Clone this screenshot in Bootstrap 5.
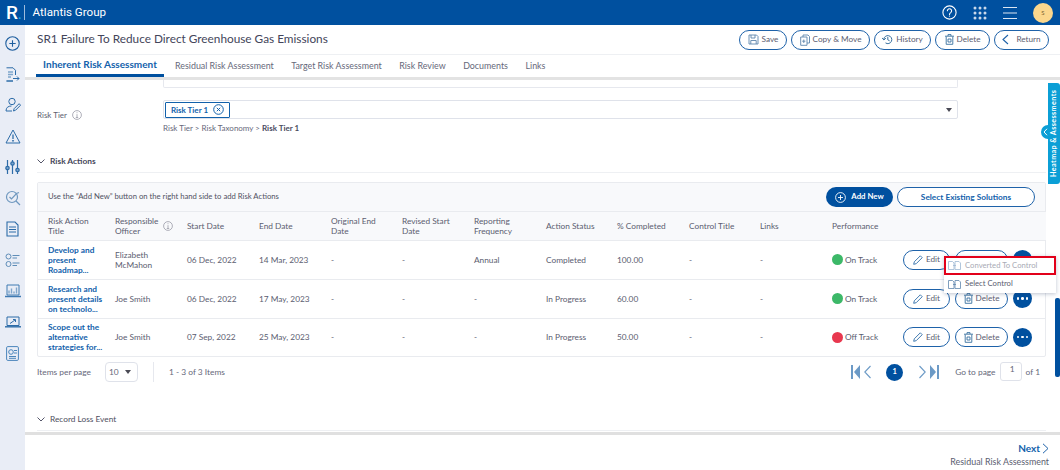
<!DOCTYPE html>
<html lang="en">
<head>
<meta charset="utf-8">
<title>Atlantis Group</title>
<link rel="stylesheet" href="https://cdn.jsdelivr.net/npm/bootstrap@5.3.0/dist/css/bootstrap.min.css">
<style>
html,body{height:470px;overflow:hidden}
body{font-family:"Lato","Liberation Sans",sans-serif;font-size:8.3px;color:#55566a;background:#fff}
svg{display:block;flex:none}
.app-top{height:25px;background:#00509f;color:#fff;padding:0 8px 0 6px}
.app-logo{font-family:"Roboto",sans-serif;font-weight:500;font-size:19px;line-height:1}
.app-logo i{font-style:normal;color:#19a9e5;font-size:13px}
.app-sep{width:1px;height:15px;background:#9dbbdc;margin:0 8px 0 2px}
.app-name{font-family:"Roboto",sans-serif;font-size:11.6px}
.app-avatar{width:20px;height:20px;border-radius:50%;background:#fbd78d;color:#7a6530;font-size:6px;margin-right:-1px}
.app-body{height:445px}
.app-side{width:25px;background:#e9edf6;padding-top:7.500px;gap:10px}
.side-cell{height:21px}
.app-main{width:1035px}
.title-bar{height:30px;padding:0 11px 0 12px;border-bottom:1px solid #eef0f3}
.title-txt{font-size:11.800px;color:#43455a;font-weight:400;margin:0}
.pill{height:20px;border:1px solid #1e62a9;border-radius:10px;background:#fff;font-size:8.200px;color:#5b5d70;gap:3px;padding:0;line-height:1}
.pill:hover{background:#fff;color:#5b5d70;border-color:#1e62a9}
.w-save{width:48px}.w-copy{width:79px}.w-hist{width:57px}.w-del{width:55px}.w-ret{width:55px}
.w-edit{width:47px}.w-del2{width:53px}
.tab-bar{padding-left:11px;border-bottom:3px solid #e3e3e3;height:25px}
.tab-link{font-size:8.900px;color:#66687a;padding:0;height:22px;display:flex;align-items:center;text-decoration:none;white-space:nowrap;margin-right:17.500px}
.tab-on{color:#1261ab;font-weight:700;font-size:10px;border-bottom:3px solid #00509f;margin-right:11px;width:128px;justify-content:center}
.content-pane{height:352px;overflow:hidden;padding:0 14px 0 12px}
.field-stub{width:795px;height:8px;margin-left:126px;border:1px solid #e6e8ee;border-top:0;border-radius:0 0 2px 2px}
.tier-row{margin-top:12px;height:19px}
.tier-label{width:126px;color:#5d5f70;gap:5px;font-size:8px;padding-top:11px}
.tier-box{width:795px;height:19px;border:1px solid #dfe2ea;border-radius:2px;padding:0 1px}
.tier-chip{width:65px;height:16px;border:1.500px solid #1261ab;border-radius:1px;color:#1261ab;font-weight:700;font-size:8px;gap:5px}
.caret-dn{width:0;height:0;border-left:3px solid transparent;border-right:3px solid transparent;border-top:4px solid #4a4a55}
.crumb{margin:3px 0 0 126px;color:#66687a;font-size:8px}
.crumb b{font-weight:700;color:#4a4b5e}
.sec-head{margin-top:20px;height:14px;gap:5px;color:#45475a;font-weight:700;font-size:8.400px}
.sec-rule{border-top:1px solid #eef0f3;margin:4px 0 9px}
.grid-panel{border:1px solid #e9ebef;border-radius:2px}
.grid-hint{height:29px;background:#f8f9fb;padding:0 10px;border-bottom:1px solid #e9ebef;color:#505263;font-size:7.700px}
.btn-add{width:67px;height:20px;background:#00509f;color:#fff;border-radius:10px;border:0;font-weight:700;font-size:7.800px;gap:5px;padding:0;margin-right:4px}
.btn-add:hover{background:#00509f;color:#fff}
.btn-sel{width:138px;height:20px;border:1px solid #1e62a9;border-radius:10px;color:#1261ab;font-weight:700;font-size:8.300px;padding:0;background:#fff}
.btn-sel:hover{background:#fff;color:#1261ab;border-color:#1e62a9}
.risk-tbl{table-layout:fixed;width:1008px;margin:0;font-size:8.300px;--bs-table-color:#5b5d70}
.risk-tbl th,.risk-tbl td{padding:0 0 0 10px;vertical-align:middle;border-bottom:1px solid #e9ebef;line-height:10px}
.risk-tbl th{height:28px;font-weight:400;background:#f8f9fb;color:#5b5d70;border-bottom:1px solid #e9ebef}
.risk-tbl td{height:39px}
.risk-tbl tr:last-child td{border-bottom:0;height:38px}
.title-lnk{color:#1261ab;font-weight:700;text-decoration:none;display:block;font-size:8.300px;white-space:nowrap}
.dot-st{width:11px;height:11px;border-radius:50%;display:inline-block;margin-right:2px}
.dot-ok{background:#3cb868}.dot-bad{background:#e8384f}
.act-cell{gap:5px}
.more-btn{width:19px;height:19px;border-radius:50%;background:#00509f;gap:2px}
.more-btn span{width:2.400px;height:2.400px;border-radius:50%;background:#fff}
.pg-row{height:30px;color:#66687a;font-size:8.400px}
.pg-sel{width:33px;height:20px;border:1px solid #dfe2ea;border-radius:4px;margin-left:14px;padding:0 6px 0 3px}
.pg-div{width:1px;height:20px;background:#e6e8ee;margin:0 15px}
.pg-right{margin-right:6px}
.pg-num{width:17px;height:17px;border-radius:50%;background:#00509f;color:#fff;font-weight:700;font-size:7.500px;margin:0 16px 0 15px}
.pg-input{width:22px;height:19px;border:1px solid #dfe2ea;border-radius:3px;margin:-2px 4px 0 4px;color:#66687a;padding:0 6px 4px 0}
.sec-foot{margin-top:25px;gap:5px;height:14px;color:#4d4f60;font-size:8.300px}
.sec-rule2{border-top:1px solid #eef0f3;margin-top:4px}
.foot-bar{height:35px;border-top:3px solid #e0e0e0;padding:8px 11px 0 0;text-align:right}
.foot-next{color:#1261ab;font-weight:700;font-size:10px;gap:2px;line-height:11px}
.foot-sub{color:#5b5d70;font-size:8.900px;line-height:10px;margin-top:3px}
.heat-tab{position:absolute;right:0;top:83px;width:12px;height:101px;background:#0b9fd6;border-radius:3px 0 0 3px;color:#fff;font-size:7.200px;font-weight:700;letter-spacing:.4px;writing-mode:vertical-rl;transform:rotate(180deg);text-align:center;line-height:12px}
.heat-toggle{position:absolute;left:1041px;top:125px;width:8px;height:14px;background:#0b9fd6;border-radius:7px 0 0 7px}
.scroll-thumb{position:absolute;left:1055px;top:298px;width:5px;height:79px;background:#00509f;border-radius:2px}
.ctx-menu{position:absolute;left:944px;top:256px;width:112px;height:37px;background:#fff;box-shadow:0 1px 4px rgba(40,60,100,.3);font-size:7.700px;color:#5b5d70}
.ctx-item{height:18px;padding-left:4px;gap:4px}
.ctx-red{height:19px;border:2px solid #e2001a;padding-left:2px;color:#a9abb5}
</style>
</head>
<body>
<header class="app-top d-flex align-items-center">
  <span class="app-logo">R<i>.</i></span>
  <span class="app-sep"></span>
  <span class="app-name">Atlantis Group</span>
  <div class="ms-auto d-flex align-items-center">
    <svg width="15" height="15" viewBox="0 0 15 15" fill="none" stroke="#fff" stroke-width="1.1"><circle cx="7.5" cy="7.5" r="6.6"/><path d="M5.4 5.8a2.1 2.1 0 1 1 3.3 1.8c-.8.5-1.2.9-1.2 1.8" stroke-linecap="round"/><circle cx="7.5" cy="11.1" r=".6" fill="#fff" stroke="none"/></svg>
    <svg class="ms-3" width="14" height="14" viewBox="0 0 14 14" fill="#c9d8ea"><circle cx="2" cy="2" r="1.5"/><circle cx="7" cy="2" r="1.5"/><circle cx="12" cy="2" r="1.5"/><circle cx="2" cy="7" r="1.5"/><circle cx="7" cy="7" r="1.5"/><circle cx="12" cy="7" r="1.5"/><circle cx="2" cy="12" r="1.5"/><circle cx="7" cy="12" r="1.5"/><circle cx="12" cy="12" r="1.5"/></svg>
    <svg class="ms-3" width="14" height="14" viewBox="0 0 14 14" stroke="#dbe6f2" stroke-width="1.1"><path d="M0 1.500h14M0 7h14M0 12.500h14"/></svg>
    <span class="app-avatar d-flex align-items-center justify-content-center ms-3">S</span>
  </div>
</header>
<div class="app-body d-flex">
  <nav class="app-side d-flex flex-column align-items-center">
    <span class="side-cell d-flex align-items-center"><svg width="15" height="15" viewBox="0 0 15 15" fill="none" stroke="#1f5f9f" stroke-width="1.1"><circle cx="7.5" cy="7.5" r="6.7"/><path d="M7.5 4.300v6.400M4.300 7.500h6.400"/></svg></span>
    <span class="side-cell d-flex align-items-center"><svg width="15" height="15" viewBox="0 0 15 15" fill="none" stroke="#2d6ca8" stroke-width="1"><path d="M1.500.8h6.500L10.500 3.300V8M8 14H1.500z"/><path d="M3 5h5M3 7.500h5M3 10h3" stroke="#7fa6cc" stroke-width="1.300"/><path d="M8 11.500h6M12 9.500l2 2-2 2"/></svg></span>
    <span class="side-cell d-flex align-items-center"><svg width="16" height="16" viewBox="0 0 16 16" fill="none" stroke="#2d6ca8" stroke-width="1"><circle cx="7" cy="4.500" r="3.200"/><path d="M1 14c0-3.500 2.200-5 5.500-5M8.500 14l.6-2.300 5-5 1.500 1.500-5 5z"/><path d="M1 14h6"/></svg></span>
    <span class="side-cell d-flex align-items-center"><svg width="16" height="15" viewBox="0 0 16 15" fill="none" stroke="#2d6ca8" stroke-width="1"><path d="M8 1 15 14H1z" stroke-linejoin="round"/><path d="M8 5.500v4.500" stroke-width="1.300"/><circle cx="8" cy="11.800" r=".5" fill="#2d6ca8"/></svg></span>
    <span class="side-cell d-flex align-items-center"><svg width="15" height="16" viewBox="0 0 15 16" fill="none" stroke="#2d6ca8" stroke-width="1.200"><path d="M2.500 1v14M7.500 1v14M12.500 1v14"/><circle cx="2.500" cy="9" r="1.700" fill="#7fa6cc"/><circle cx="7.500" cy="4.500" r="1.700" fill="#7fa6cc"/><circle cx="12.500" cy="11" r="1.700" fill="#7fa6cc"/></svg></span>
    <span class="side-cell d-flex align-items-center"><svg width="16" height="16" viewBox="0 0 16 16" fill="none" stroke="#6f98bf" stroke-width="1.200"><circle cx="7" cy="7" r="5.500"/><path d="M11 11l4 4M4.500 7l2 2 5-5.500 2.500-1"/></svg></span>
    <span class="side-cell d-flex align-items-center"><svg width="13" height="16" viewBox="0 0 13 16" fill="none" stroke="#2d6ca8" stroke-width="1.100"><path d="M1 1h8l3 3v11H1z"/><path d="M3 6h7M3 8.500h7M3 11h7" stroke-width="1"/></svg></span>
    <span class="side-cell d-flex align-items-center"><svg width="16" height="15" viewBox="0 0 16 15" fill="none" stroke="#5f8db8" stroke-width="1"><circle cx="3.500" cy="3.500" r="2.500"/><circle cx="3.500" cy="11" r="2.500"/><path d="M7.500 2.500h7M7.500 5h4.500M7.500 10h7M7.500 12.500h4.500" stroke-width="1.100"/></svg></span>
    <span class="side-cell d-flex align-items-center"><svg width="16" height="14" viewBox="0 0 16 14" fill="none" stroke="#3f7ab2" stroke-width="1"><path d="M2 1h12v10H2z"/><path d="M0 12.500h16" stroke-width="1.500"/><path d="M4 9.500v-3M6.500 9.500v-5M9 9.500v-2M11.500 9.500v-6" stroke="#7fa6cc" stroke-width="1.400"/></svg></span>
    <span class="side-cell d-flex align-items-center"><svg width="16" height="12" viewBox="0 0 16 12" fill="none" stroke="#2d6ca8" stroke-width="1"><path d="M2 1h12v8.500H2z"/><path d="M0 10.800h16" stroke-width="1.400"/><path d="M5 7.500l5-3.500M8 3.500h2.500V6"/></svg></span>
    <span class="side-cell d-flex align-items-center"><svg width="13" height="15" viewBox="0 0 13 15" fill="none" stroke="#4a85bb" stroke-width="1"><rect x=".6" y=".6" width="11.800" height="13.800" rx="1.200"/><circle cx="5" cy="6" r="2.300"/><path d="M8 4.500h3M8 7h3M3 10.500h7M3 12.300h7"/></svg></span>
  </nav>
  <main class="app-main d-flex flex-column">
    <div class="title-bar d-flex align-items-center justify-content-between">
      <h1 class="title-txt">SR1 Failure To Reduce Direct Greenhouse Gas Emissions</h1>
      <div class="d-flex" style="gap:4px">
        <button class="btn pill w-save d-flex align-items-center justify-content-center"><svg width="11" height="11" viewBox="0 0 11 11" fill="none" stroke="#5f86ad" stroke-width=".9"><path d="M1 1h7.500L10 2.500V10H1z"/><path d="M3 1v3h4V1M2.800 10V6.500h5.400V10"/></svg>Save</button>
        <button class="btn pill w-copy d-flex align-items-center justify-content-center"><svg width="10" height="12" viewBox="0 0 10 12" fill="none" stroke="#5f86ad" stroke-width=".9"><path d="M3 3V1h5l1.500 1.500V9H7M.7 3h6.300v8.300H.7z"/><path d="M3.800 5.500v3.500M2.200 7.200h3.200"/></svg>Copy &amp; Move</button>
        <button class="btn pill w-hist d-flex align-items-center justify-content-center"><svg width="11" height="11" viewBox="0 0 11 11" fill="none" stroke="#38709f" stroke-width="1"><path d="M1.800 5.500A4 4 0 1 1 3.500 8.900"/><path d="M0 3.800 1.900 6l2-1.900M5.800 3v2.800l1.800 1"/></svg>History</button>
        <button class="btn pill w-del d-flex align-items-center justify-content-center"><svg width="9" height="11" viewBox="0 0 9 11" fill="none" stroke="#38709f" stroke-width=".9"><path d="M1.200 2.500V10.300h6.600V2.500M0 2.200h9M3 2V.6h3V2"/><path d="M3 5h3v3H3z"/></svg>Delete</button>
        <button class="btn pill w-ret d-flex align-items-center justify-content-center"><svg width="7" height="11" viewBox="0 0 7 11" fill="none" stroke="#1e62a9" stroke-width="1.100"><path d="M6 1 1 5.500 6 10"/></svg><span class="ms-1">Return</span></button>
      </div>
    </div>
    <div class="tab-bar d-flex align-items-start">
      <a class="tab-link tab-on" href="#">Inherent Risk Assessment</a>
      <a class="tab-link" href="#">Residual Risk Assessment</a>
      <a class="tab-link" href="#">Target Risk Assessment</a>
      <a class="tab-link" href="#">Risk Review</a>
      <a class="tab-link" href="#">Documents</a>
      <a class="tab-link" href="#">Links</a>
    </div>
    <section class="content-pane">
      <div class="field-stub"></div>
      <div class="tier-row d-flex align-items-center">
        <span class="tier-label d-flex align-items-center">Risk Tier
          <svg width="10" height="10" viewBox="0 0 10 10" fill="none" stroke="#9a9ca8" stroke-width=".8"><circle cx="5" cy="5" r="4.400"/><path d="M5 4.200v3.200M3.800 7.500h2.400M5 2.300v.9"/></svg>
        </span>
        <div class="tier-box d-flex align-items-center justify-content-between">
          <span class="tier-chip d-flex align-items-center justify-content-center">Risk Tier 1
            <svg width="11" height="11" viewBox="0 0 11 11" fill="none" stroke="#1261ab" stroke-width="1"><circle cx="5.500" cy="5.500" r="4.800"/><path d="M3.800 3.800l3.400 3.400M7.200 3.800 3.800 7.200"/></svg>
          </span>
          <span class="caret-dn me-1"></span>
        </div>
      </div>
      <div class="crumb">Risk Tier &gt; Risk Taxonomy &gt; <b>Risk Tier 1</b></div>
      <div class="sec-head d-flex align-items-center">
        <svg width="8" height="5" viewBox="0 0 8 5" fill="none" stroke="#55566a" stroke-width="1"><path d="M.5.500 4 4 7.500.500"/></svg>
        Risk Actions
      </div>
      <div class="sec-rule"></div>
      <div class="grid-panel">
        <div class="grid-hint d-flex align-items-center justify-content-between">
          <span>Use the “Add New” button on the right hand side to add Risk Actions</span>
          <div class="d-flex">
            <button class="btn btn-add d-flex align-items-center justify-content-center"><svg width="11" height="11" viewBox="0 0 11 11" fill="none" stroke="#fff" stroke-width=".9"><circle cx="5.500" cy="5.500" r="4.900"/><path d="M5.500 3v5M3 5.500h5"/></svg>Add New</button>
            <button class="btn btn-sel">Select Existing Solutions</button>
          </div>
        </div>
        <table class="table risk-tbl">
          <colgroup>
            <col style="width:67px"><col style="width:72px"><col style="width:72px"><col style="width:72px"><col style="width:71px"><col style="width:72px"><col style="width:72px"><col style="width:71px"><col style="width:72px"><col style="width:71px"><col style="width:72px"><col style="width:71px"><col>
          </colgroup>
          <thead>
            <tr><th>Risk Action<br>Title</th><th><span class="d-flex align-items-center justify-content-between pe-1">Responsible Officer<svg width="10" height="10" viewBox="0 0 10 10" fill="none" stroke="#9a9ca8" stroke-width=".8"><circle cx="5" cy="5" r="4.400"/><path d="M5 4.200v3.200M3.800 7.500h2.400M5 2.300v.9"/></svg></span></th><th>Start Date</th><th>End Date</th><th>Original End<br>Date</th><th>Revised Start<br>Date</th><th>Reporting<br>Frequency</th><th>Action Status</th><th>% Completed</th><th>Control Title</th><th>Links</th><th>Performance</th><th></th></tr>
          </thead>
          <tbody>
            <tr><td><a class="title-lnk" href="#">Develop and<br>present<br>Roadmap...</a></td><td>Elizabeth<br>McMahon</td><td>06 Dec, 2022</td><td>14 Mar, 2023</td><td>-</td><td>-</td><td>Annual</td><td>Completed</td><td>100.00</td><td>-</td><td>-</td><td><span class="d-flex align-items-center"><span class="dot-st dot-ok"></span>On Track</span></td>
              <td><div class="act-cell d-flex align-items-center">
                <button class="btn pill w-edit d-flex align-items-center justify-content-center"><svg width="10" height="10" viewBox="0 0 10 10" fill="none" stroke="#2d6ca8" stroke-width=".9"><path d="M.7 9.300 1.300 6.800 7.300.8 9.200 2.700 3.200 8.700z"/></svg>Edit</button>
                <button class="btn pill w-del2" aria-label="Delete"></button>
                <span class="more-btn d-flex align-items-center justify-content-center"><span></span><span></span><span></span></span>
              </div></td></tr>
            <tr><td><a class="title-lnk" href="#">Research and<br>present details<br>on technolo...</a></td><td>Joe Smith</td><td>06 Dec, 2022</td><td>17 May, 2023</td><td>-</td><td>-</td><td>-</td><td>In Progress</td><td>60.00</td><td>-</td><td>-</td><td><span class="d-flex align-items-center"><span class="dot-st dot-ok"></span>On Track</span></td>
              <td><div class="act-cell d-flex align-items-center">
                <button class="btn pill w-edit d-flex align-items-center justify-content-center"><svg width="10" height="10" viewBox="0 0 10 10" fill="none" stroke="#2d6ca8" stroke-width=".9"><path d="M.7 9.300 1.300 6.800 7.300.8 9.200 2.700 3.200 8.700z"/></svg>Edit</button>
                <button class="btn pill w-del2 d-flex align-items-center justify-content-center"><svg width="9" height="11" viewBox="0 0 9 11" fill="none" stroke="#38709f" stroke-width=".9"><path d="M1.200 2.500V10.300h6.600V2.500M0 2.200h9M3 2V.6h3V2"/><path d="M3 5h3v3H3z"/></svg>Delete</button>
                <span class="more-btn d-flex align-items-center justify-content-center"><span></span><span></span><span></span></span>
              </div></td></tr>
            <tr><td><a class="title-lnk" href="#">Scope out the<br>alternative<br>strategies for...</a></td><td>Joe Smith</td><td>07 Sep, 2022</td><td>25 May, 2023</td><td>-</td><td>-</td><td>-</td><td>In Progress</td><td>50.00</td><td>-</td><td>-</td><td><span class="d-flex align-items-center"><span class="dot-st dot-bad"></span>Off Track</span></td>
              <td><div class="act-cell d-flex align-items-center">
                <button class="btn pill w-edit d-flex align-items-center justify-content-center"><svg width="10" height="10" viewBox="0 0 10 10" fill="none" stroke="#2d6ca8" stroke-width=".9"><path d="M.7 9.300 1.300 6.800 7.300.8 9.200 2.700 3.200 8.700z"/></svg>Edit</button>
                <button class="btn pill w-del2 d-flex align-items-center justify-content-center"><svg width="9" height="11" viewBox="0 0 9 11" fill="none" stroke="#38709f" stroke-width=".9"><path d="M1.200 2.500V10.300h6.600V2.500M0 2.200h9M3 2V.6h3V2"/><path d="M3 5h3v3H3z"/></svg>Delete</button>
                <span class="more-btn d-flex align-items-center justify-content-center"><span></span><span></span><span></span></span>
              </div></td></tr>
          </tbody>
        </table>
      </div>
      <div class="pg-row d-flex align-items-center">
        <span>Items per page</span>
        <span class="pg-sel d-flex align-items-center justify-content-between">10<span class="caret-dn"></span></span>
        <span class="pg-div"></span>
        <span>1 - 3 of 3 Items</span>
        <div class="pg-right ms-auto d-flex align-items-center">
          <svg width="9" height="14" viewBox="0 0 9 14" fill="#6c9ac6"><rect x="0" y="0" width="2" height="14"/><path d="M9 0v14L3 7z"/></svg>
          <svg class="ms-1" width="7" height="14" viewBox="0 0 7 14" fill="none" stroke="#6c9ac6" stroke-width="1.100"><path d="M6.500 1 .8 7l5.700 6"/></svg>
          <span class="pg-num d-flex align-items-center justify-content-center">1</span>
          <svg width="7" height="14" viewBox="0 0 7 14" fill="none" stroke="#6c9ac6" stroke-width="1.100"><path d="m.5 1 5.700 6-5.700 6"/></svg>
          <svg class="ms-1" width="9" height="14" viewBox="0 0 9 14" fill="#6c9ac6"><rect x="7" y="0" width="2" height="14"/><path d="M0 0v14l6-7z"/></svg>
          <span style="margin-left:16px">Go to page</span>
          <span class="pg-input d-flex align-items-center justify-content-end">1</span>
          <span>of 1</span>
        </div>
      </div>
      <div class="sec-foot d-flex align-items-center">
        <svg width="8" height="5" viewBox="0 0 8 5" fill="none" stroke="#55566a" stroke-width="1"><path d="M.5.500 4 4 7.500.500"/></svg>
        Record Loss Event
      </div>
      <div class="sec-rule2"></div>
    </section>
    <footer class="foot-bar">
      <div class="foot-next d-flex justify-content-end align-items-center">Next <svg width="7" height="11" viewBox="0 0 7 11" fill="none" stroke="#1e62a9" stroke-width="1"><path d="m1 .8 5 4.700-5 4.700"/></svg></div>
      <div class="foot-sub">Residual Risk Assessment</div>
    </footer>
  </main>
</div>
<div class="heat-tab">Heatmap &amp; Assessments</div>
<div class="heat-toggle d-flex align-items-center justify-content-center"><svg width="5" height="8" viewBox="0 0 5 8" fill="none" stroke="#fff" stroke-width="1"><path d="M4 .8 1 4l3 3.200"/></svg></div>
<div class="scroll-thumb"></div>
<div class="ctx-menu">
  <div class="ctx-item ctx-red d-flex align-items-center"><svg width="13" height="9" viewBox="0 0 13 9" fill="none" stroke="#9db8d3" stroke-width=".8"><path d="M.5.500h4l1.500 1.500V8.500H.5zM7 .500h4L12.500 2V8.500H7z"/><path d="M5 4.500h3"/></svg>Converted To Control</div>
  <div class="ctx-item d-flex align-items-center"><svg width="13" height="9" viewBox="0 0 13 9" fill="none" stroke="#5f86ad" stroke-width=".8"><path d="M.5.500h4l1.500 1.500V8.500H.5zM7 .500h4L12.500 2V8.500H7z"/><path d="M5 4.500h3"/></svg>Select Control</div>
</div>
</body>
</html>
